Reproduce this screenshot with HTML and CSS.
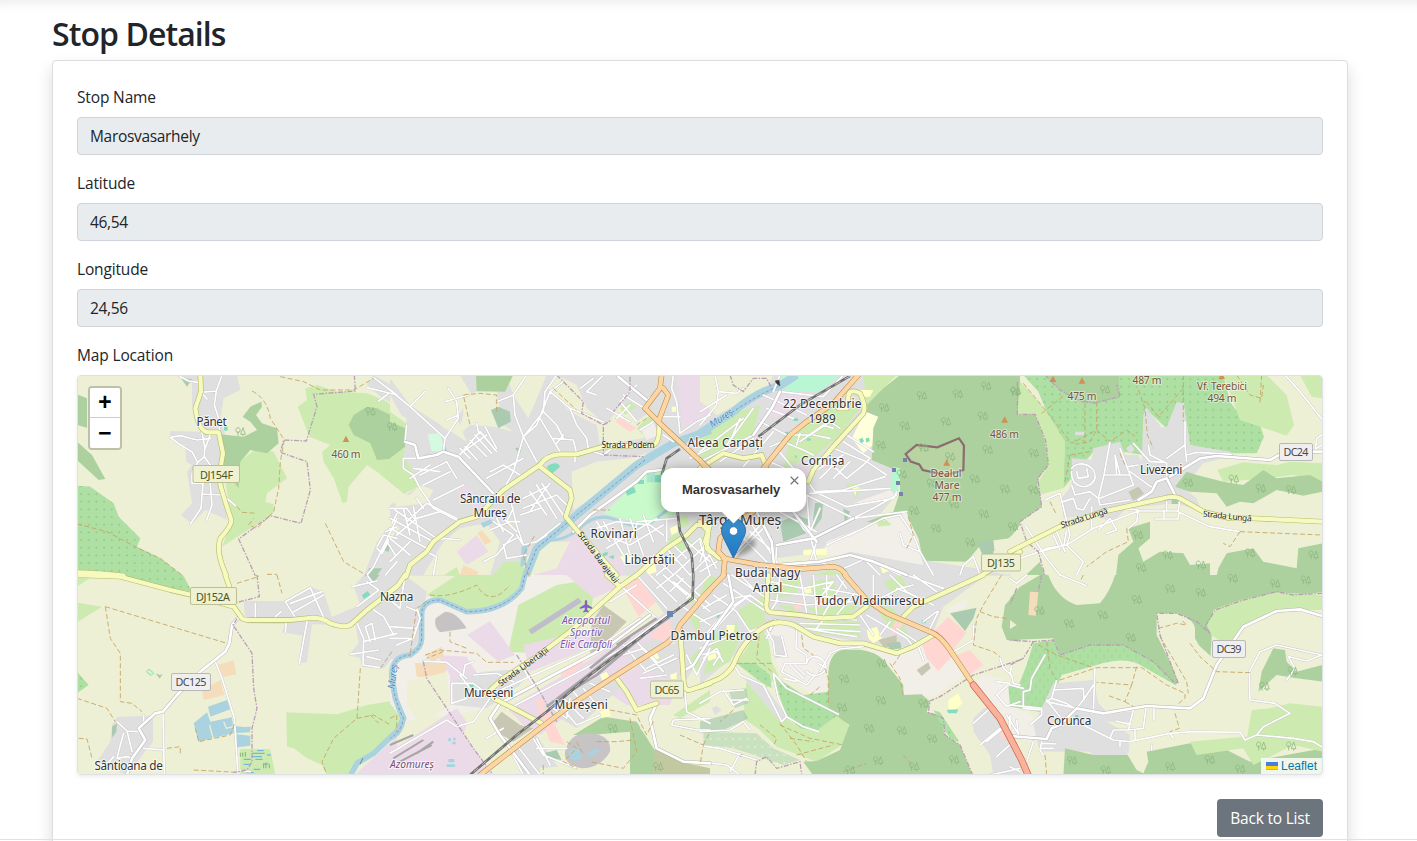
FILE: index.html
```html
<!DOCTYPE html>
<html lang="en">
<head>
<meta charset="utf-8">
<title>Stop Details</title>
<link rel="stylesheet" href="styles.css">
</head>
<body>
<main class="page">
  <h2 class="title">Stop Details</h2>
  <section class="card">
    <div class="field"><label class="label" for="n">Stop Name</label><input class="control" id="n" value="Marosvasarhely" readonly></div>
    <div class="field"><label class="label" for="la">Latitude</label><input class="control" id="la" value="46,54" readonly></div>
    <div class="field"><label class="label" for="lo">Longitude</label><input class="control" id="lo" value="24,56" readonly></div>
    <div class="label">Map Location</div>
    <div class="map">
<svg class="tiles" viewBox="78 376 1244 398" width="1244" height="398">
<defs>
  <pattern id="dots" width="23" height="23" patternUnits="userSpaceOnUse"><rect width="23" height="23" fill="#aedfa3"/><circle cx="12" cy="12" r="1.6" fill="#5f9d62"/></pattern>
  <pattern id="vine" width="24" height="36" patternUnits="userSpaceOnUse"><rect width="24" height="36" fill="#aedfa3"/><path d="M6 4v12M18 22v12" stroke="#83c07c" stroke-width="1"/></pattern>
  <pattern id="plus" width="22" height="24" patternUnits="userSpaceOnUse"><rect width="22" height="24" fill="#c9e1bf"/><circle cx="11" cy="12" r="2.5" fill="#eef6e8"/></pattern>
  <g id="tree"><path d="M-7 13V-2M8 14V8M-7 3c-8 0-9-15 0-15c9 0 8 15 0 15M8-12L1 8H15Z"/></g>
  <path id="peak" d="M0-10L10 9H-10Z"/>

  <g id="streets">
    <g class="ta">
      <path d="M310 5L335 18L362 22M372 52L390 72M372 52L418 48L435 0M418 48L412 90L425 130L428 172M375 172L383 215L382 245L362 262L345 230L310 210L280 187L310 182L360 195L400 190M400 178L385 220M362 262L345 295L345 325H378M382 245L400 270V330L405 390L388 437M378 325L372 400L340 447M375 357L438 360L475 392M870 38L960 60M890 8L960 60M905 78L935 55"/>
      <path d="M960 430L890 575L870 600M900 515L920 480L960 490M925 470L960 455M900 520L915 535L935 495M945 445L960 415M930 500L955 540M960 560L925 600"/>
    </g>
    <g class="tb">
      <path d="M413 255L435 310L472 430L482 585L520 590M258 412L262 600M200 520L262 525M120 440L150 468L185 470M150 468L165 530M140 475L130 510L120 550L150 545L165 550M110 545L80 580M535 135V85M595 125L612 110M625 80L700 38L740 128M625 80L655 128M640 85L735 50M650 110L740 60M628 140L625 172M690 140L667 265M870 20L905 45L840 95M825 35L900 18M870 0L885 20M890 105L920 125L950 180M840 145L860 190L858 270L910 278M820 238L905 225M860 200L960 175M865 155L880 200M885 145L895 195M865 155L885 145M870 245L910 255M200 450L200 420"/>
    </g>
    <g class="tc">
      <path d="M0 45L60 95L105 50M60 95L165 190L205 130L200 80L175 40M165 80L235 60M165 190L160 230L205 245L310 355M170 135L205 120M45 200L75 210L85 245L140 240L160 230M45 200L50 150M85 250L40 250L40 280L70 300L90 340L130 400L210 440M90 300L170 260L200 310M70 280L150 290M100 330L180 290M130 375L220 330M60 310L120 270M205 245L270 170L320 230M220 230L290 180M240 195L290 245M255 180L305 235M225 215L262 255M265 170L260 145M285 155L320 220M210 220L240 250M290 310L400 250M300 290L340 270L390 300M320 80L370 60L410 0M370 60L375 120L400 185L370 290L340 345M400 185L440 150L480 50L520 20M480 50L540 100L560 150L590 190L595 225M400 185L440 260M460 110L500 150L520 190M450 130L510 230M540 100L640 140M400 185L460 110L465 50L500 0M595 225L640 240L690 200M490 190L550 195L560 235M500 205L520 180M555 240V260M590 50L640 0M570 40L610 10M590 50L620 60M685 5L770 75L810 45M700 60L780 110M740 30L690 80L740 140M720 90L680 130M650 100L720 140M790 140L750 165M870 175L860 80L845 40L850 0M820 125L870 125M870 175L920 140L960 120M820 180L850 200M960 220L900 250"/>
      <path d="M0 430L130 500M0 460L110 520M15 405L140 490M40 400L60 480M70 395L90 500M50 440L110 385L200 430M20 480L80 430L150 410M0 400L50 400L80 440M80 370L100 400M0 560L60 500M0 490L60 540M130 500L160 490L210 495M110 530L140 545L130 600M360 370L380 450L400 510L380 480M370 400L350 440L390 440M420 410L460 350L480 325M400 400L500 360L540 400M400 370L470 335M390 420L450 400M440 330L500 430M420 350L470 420M455 325L520 420M340 470L320 430M310 440L370 480L320 540L280 560M340 430L380 470M300 465L360 440M380 490L340 510L350 550L410 540M440 500L470 480M400 510L440 500L510 445M550 470L600 420L740 320L770 290L815 285M620 440L660 500M640 440L700 540M690 430L720 540M720 430L760 540M740 440L860 430M620 460L680 440L780 450L820 480M600 460L720 510L820 450M650 520L800 430M760 420L790 500M740 450L720 500M830 430V500M770 560L850 510L890 550M790 540L850 600M830 520L900 600M880 490L960 560M800 600L930 490M850 600L960 500M900 600L960 540M930 500L960 600"/>
    </g>
    <g class="td">
      <path d="M0 75L30 100L45 0M0 155L80 160M80 100L90 130L70 190L20 210M50 95L85 110M60 190L0 190M100 258L170 262L230 310M185 325L250 325L290 355M185 325V385L230 370M210 300L240 340L300 350M250 300L320 295L370 320M220 300L225 270L250 260M200 455L250 440L300 370M200 455L170 435L0 535M300 430L330 385L380 360L660 210L780 120M300 430L330 480L420 600M350 405L690 225L830 120M320 350L650 200L750 130M290 490L340 460M400 280L430 330M500 380L560 450L630 420M490 400L530 430L540 370M520 370L580 430M550 350L600 410M580 340L620 390M600 325L660 350M360 525L400 600M440 490L480 570M380 510L450 600M440 520H530M430 490L460 540L560 580M700 40L800 130M740 0L830 100M780 0L860 80M700 240L760 220L800 260M700 210L770 290M740 200L820 290M770 280L850 240M730 260L810 220M760 295L860 250M750 310L830 300M800 385L780 430L800 520L880 560L960 565M885 350L890 410L960 445M960 430L850 435L845 450L920 465H960M740 30L660 80M960 0L890 70M850 20L960 110M840 50L880 10M870 90L960 150M890 190L960 200M890 240L920 300L960 220M885 285L910 270L960 190M820 0L890 60M860 0L960 90M800 40L850 0"/>
    </g>
    <g class="te">
      <path d="M45 0L55 50L110 55L130 40M0 110L80 60M55 50L50 90L0 150M240 50L370 65L430 0M240 0L220 50M240 50L215 100L160 180L0 260M200 100L280 130M180 140L260 180M220 170L130 275M190 60L320 120M160 100L80 210M120 130L90 200M0 230L130 130M60 260L160 190M210 215L270 190M250 200L310 225L340 240M280 180L330 180L390 140L420 160M300 200L370 150L400 160M300 175L290 210M340 180L390 190M210 260L300 300M230 220L280 280M325 320L345 350L430 345L555 305M345 350L440 395L580 370L590 350M340 290L430 240M375 250L440 310M400 220L500 260L560 300M430 200L510 250L490 270M440 180L520 230M360 310L420 250M400 310L450 260M440 310L490 270M320 360L460 430L620 410M330 355L570 340M460 430L380 470L340 490L230 510M460 430L520 400L590 360M230 510L225 600M320 360L330 480L350 560M280 411L310 460L350 500L330 560L290 590M170 411L210 480L225 600M240 411L350 470M360 400L330 470M130 411L250 590M190 440L110 530M130 490L200 560M150 470L220 530M100 550L190 460M0 440L60 440M0 490L50 580M30 470L0 560M0 590L50 560M230 570L360 560L450 540L520 560L620 600M360 560L420 585L500 550L600 600M450 480L550 430L600 420L640 480L660 530L610 510L600 475M380 510L500 455M660 530L700 600M780 600L790 570L820 545L840 600M540 600L500 560"/>
    </g>
    <g class="tf">
      <path d="M85 0L100 80L0 200M70 25L200 110M40 60L110 110M10 100L80 60M0 140L70 110L150 60M20 190L110 90L150 60L190 90M150 60L100 70M110 110L150 170L190 155M0 240L50 230L70 260M10 250L50 220L60 240L40 270M0 220L100 180M95 0L200 70M120 0L160 40L200 40M210 20L310 40L400 20M240 0L230 80L210 110M300 0L320 115M210 50L430 70M210 75L320 90L460 80M340 0L350 120M380 0V60M410 0L440 40M400 20L350 80M370 40L480 60L500 90M430 20L370 120M460 60L410 120M300 145L480 150M310 160L480 170M340 165L470 185M240 120L470 135M370 135L350 160M480 120L520 180M500 120L620 190L640 215M590 160L650 200M570 140L540 180M520 0V80L600 40L640 30M570 0L620 50L700 90M560 60L600 80M590 40L660 70M620 0L730 40M640 0L710 50M670 140L710 110L715 110L690 160M760 230L820 195V150M655 215L670 255M200 165L220 200L225 240L260 245L245 185M210 165L200 190M290 160L288 220L320 240L320 265M320 265C330 225 380 250 378 280C370 300 340 310 320 290M320 265H255L245 290L320 330L345 300M270 270L310 310M285 270L315 300M250 310L290 320M378 280L355 265M360 290L390 235L420 222L490 215M105 275L120 300L190 330L245 440L260 425L235 370L220 300M220 295L260 340L320 370L415 418M260 425L310 455L355 470M0 385L60 350L130 345M70 345L100 390L140 370M90 375H145M0 470L90 465L130 440L150 465M0 512L60 520L170 555M120 535L90 590M0 560L80 570L120 600M820 445L870 400M840 510L900 460M860 500L920 450M870 600L960 580M890 545L940 500M890 320L930 325L890 360L920 395L960 380M920 420L960 485L930 490M900 250L910 280L935 300L940 325L960 330"/>
    </g>
    <g class="tg">
      <path d="M825 0L870 50L935 132M935 180L920 190L915 232M920 220L935 210M300 200L282 300L265 370L270 390L360 375M300 300L320 300L315 240M315 240L330 300M282 300L360 300L330 220M360 300L370 330L270 370M370 205L420 260L465 262M415 210L420 240L470 265V310M525 140L525 210L470 250M525 210L530 260M530 240L560 232L665 238M355 275L385 270M360 290L430 340M185 280C200 255 260 265 255 310C240 350 180 340 185 290M200 290L205 310L235 305L230 280M185 330L195 360L240 350L265 370M190 370L200 400L220 405L240 370M105 375L150 355L180 480L170 510M160 380L190 370M245 395V460M330 400L385 405L380 440L355 460M30 550L90 530L170 510L250 460L385 408L500 408L600 455L688 470M435 432H505V400M462 405V432M45 450L110 550L150 600M90 530L110 520L170 510L220 560L200 600M130 480L150 525M140 470L165 530M170 465L160 520M265 465L300 430L320 465L290 475M470 405V380M510 370L505 408"/>
    </g>
    <g class="th">
      <path d="M0 10L20 25L50 0M150 0L230 32M105 240L65 310L60 345L40 350V400L90 405M0 330L40 340M0 390L95 400V420L60 450M5 270L0 300M125 370L110 380L200 400L220 375L250 330M140 315L125 370L170 385L200 405M130 345L220 340L222 375M255 280L250 410M150 425L110 375M200 440L310 495L360 500L480 475L550 470L690 472L705 495L740 480L850 490L910 500L935 515M370 405L355 465L400 460L408 400M432 400V435M318 438L360 448M300 490L310 465L355 465M375 465V495M330 500V515M480 475L490 490M425 510V525M740 480L760 455L840 415L795 385L720 375L718 290L750 230L800 210L935 240L890 258L835 245L855 280L830 315M95 500L90 525L100 540M95 505L140 507M95 520H130M70 500L50 560M0 575L30 590M0 420L0 480M20 435L25 480"/>
    </g>
  </g>

  <g id="avenues">
    <g class="tb"><path d="M487 125L465 150L457 205L445 230L370 290L300 360L258 410L235 415L185 460L205 495L165 550L150 600"/></g>
    <g class="tc"><path d="M45 200L75 210L85 250L140 240L160 230L205 245L310 355M550 470L600 420L740 320L770 290L815 285M685 5L770 75"/></g>
    <g class="tf"><path d="M85 0L100 80L20 190M210 165L225 135"/></g>
    <g class="tg"><path d="M385 375L425 350L440 320L470 310L495 360M480 305L570 250L620 243L780 255L810 238M910 230H937"/></g>
    <g class="th"><path d="M0 483L110 492M110 492L125 460L150 450L200 400L280 415L410 393L540 400L580 370L620 270L700 155L800 108L870 103L937 123"/></g>
    <g class="te"><path d="M170 411L215 500L225 600M280 411L350 500M230 510L340 490L380 470L460 430M240 50L215 100L160 180M230 570L360 560L450 540L520 560L620 600"/></g>
    <g class="td"><path d="M800 385L780 430L800 520L880 560L960 565M420 600L330 480L300 430L330 385L660 210L780 120M885 285L910 270L960 190"/></g>
  </g>

  <g id="yellow">
    <g class="ta"><path d="M370 0L372 50L355 100Q365 172 395 172H425L438 235L432 270L430 330L445 380L463 435Q465 450 430 490Q415 530 448 602M0 592L70 595L140 602"/></g>
    <g class="tb"><path d="M445 0L457 35L470 95L495 130Q500 135 520 135H640L710 128Q740 130 760 145Q800 160 820 150L870 105L960 35M0 0L130 5L280 45L345 60L470 95"/></g>
    <g class="tc"><path d="M48 605L60 570L110 530L130 500L210 440L260 425L300 385L340 345L450 270Q470 240 510 238H560L640 215L790 210Q808 205 808 150M450 275L540 345L545 370L527 425L560 465L680 600M735 605L830 520L890 480L920 450H960L945 500L960 530"/></g>
    <g class="td"><path d="M0 50L25 30L45 0M740 0L690 35L640 80L540 170L440 245L340 310L290 355M310 370L380 405L455 445M650 0L690 35M680 310L710 350L740 405L800 385M870 160L880 300Q880 350 900 345L960 325"/></g>
    <g class="te"><path d="M325 320L340 285L400 215L490 115Q500 95 480 55Q440 35 445 80L440 100L415 100M0 280L70 235L130 250L185 240L200 280M0 440L25 470L20 520L60 550M840 604L960 530"/></g>
    <g class="tf"><path d="M205 0L200 80Q195 110 215 112L300 120L370 130L460 125L500 95M0 335L60 310Q90 290 100 270Q120 220 150 190Q200 140 240 142Q280 145 290 155L340 185L420 205L490 205L590 235L640 215L700 180M610 125L640 95L850 0"/></g>
    <g class="tg"><path d="M0 530L60 500L150 455L280 410L460 370Q490 362 510 370L580 410L660 430H730L940 440"/></g>
  </g>
  <g id="orange">
    <g class="tc"><path d="M815 0L810 40L765 100L815 150L960 285M820 40L835 60L805 140"/></g>
    <g class="te"><path d="M0 255L110 411M190 280L270 180L320 140L400 85L475 0M200 270L160 411L110 440L60 490L55 530L75 550L70 602M70 550L180 570L300 582L400 575Q430 580 440 605"/></g>
    <g class="tf"><path d="M72 0L0 75M435 0L500 75L560 115L690 170Q720 180 750 225L822 332"/></g>
    <g class="td"><path d="M960 45L870 150Q860 180 830 205L680 300L550 385L450 460L270 600"/></g>
  </g>
  <g id="rail">
    <g class="tc"><path d="M815 300L830 250L870 222M862 405L870 470L905 540L910 602"/></g>
    <g class="td"><path d="M910 0L908 70L840 120L720 210L600 300L470 410L380 480L240 600"/></g>
    <g class="te"><path d="M450 3L300 90L175 185"/></g>
  </g>
</defs>

<rect x="78" y="376" width="1244" height="398" fill="#eef0d5"/>
<g class="ta">
  <polygon class="grass" points="662,95 690,75 685,40 720,30 780,50 870,55 920,75 960,100 960,340 900,290 870,270 815,335 810,380 797,385 770,310 740,260 735,230 760,210 697,185"/>
  <polygon class="grass" points="440,290 500,250 540,220 590,230 630,310 570,355 565,380 590,388 590,415 435,515 465,440"/>
  <polygon class="forest" points="0,58 30,70 30,158 0,150"/><polygon class="forest" points="0,200 45,240 85,312 65,315 0,255"/>
  <polygon fill="url(#dots)" points="0,332 40,335 110,385 125,425 190,490 180,515 250,550 315,600 0,600"/>
  <polygon class="town" points="345,0 480,0 490,45 440,70 430,130 445,180 440,330 450,435 385,405 345,447 312,420 345,385 330,290 345,270 327,260 325,210 300,205 278,185 280,168 370,170 345,90"/>
  <polygon class="forest" points="428,178 500,185 540,165 520,140 497,125 520,95 553,80 555,95 537,120 555,145 600,160 605,205 570,235 520,225 490,260 485,340 470,320 440,290"/>
  <polygon class="forest" points="815,150 830,120 870,95 900,100 960,130 960,250 900,255 880,205 830,180"/>
  <polygon class="town" points="290,0 360,0 355,25"/><polygon class="park" points="312,10 345,12 330,35"/>
  <polygon class="town" points="870,30 890,0 960,40 960,95 910,65"/><polygon class="town" points="900,500 960,430 960,602 860,602"/>
  <rect fill="#82dcbe" x="441" y="154" width="11" height="13"/><polygon class="park" points="920,505 940,510 935,530 918,525"/><polygon class="park" points="875,580 915,580 900,602 875,602"/>
</g>
<g class="tb">
  <polygon fill="url(#dots)" points="130,0 318,0 345,50 280,38"/><polygon fill="url(#dots)" points="0,290 35,330 0,355"/>
  <polygon class="grass" points="0,83 75,95 0,142"/><polygon class="grass" points="0,0 45,5 0,35"/>
  <polygon class="town" points="500,78 625,78 700,35 740,50 765,125 850,90 830,35 860,0 960,0 960,235 920,280 855,275 850,250 815,240 845,205 835,150 790,150 705,148 690,262 665,265 675,182 615,172 625,148 505,145"/>
  <polygon class="town" points="120,425 228,422 228,500 150,600 60,560 100,500 105,450"/>
  <polygon class="park" points="105,455 120,445 118,470 105,488"/>
  <polygon class="tan" points="422,270 470,256 478,298 438,306"/><polygon class="tan" points="375,345 430,315 442,360 380,375"/>
  <polygon class="water" points="393,395 450,375 460,403 400,425"/><polygon class="water" points="350,445 390,412 400,440 465,427 468,452 500,456 522,455 518,472 470,475 405,490 365,500"/><polygon class="water" points="480,478 520,482 520,512 480,517"/>
  <path d="M398 450L408 490M440 440L448 460L468 455" fill="none" stroke="#eef0d5" stroke-width="1.2"/>
  <polygon class="grass" points="628,412 780,418 870,390 960,375 960,470 870,545 820,602 750,602 735,570 690,550 650,520 630,515"/><polygon class="grass" points="490,522 580,522 595,600 490,600"/>
  <path d="M525 535h38M525 545h30M500 553h22M535 553h22M540 527h20M560 567h15M500 568h20M530 583h20M510 593h20M570 540h12" stroke="#5eaee8"/><path d="M490 545v-12M497 545v-12M505 545v-14M560 580v-15M567 580v-17M577 580v-12" stroke="#7eb46c"/>
  <polygon fill="#c8f8d0" stroke="#94dfa5" points="208,290 216,282 230,294 222,302"/><path class="park" d="M236 295L248 300L257 297L248 311Z"/>
  <polygon class="park" points="870,0 908,0 885,28"/><polygon fill="#82dcbe" points="855,60 872,48 880,60 860,72"/>
  <polygon class="ind" points="830,602 960,485 960,602"/>
</g>
<g class="tc">
  <polygon class="town" points="0,10 60,90 230,200 150,0 960,0 960,602 0,602 0,390 90,330 40,240 50,130 0,100"/>
  <polygon class="farm" points="10,0 210,0 245,60 200,130 170,165 75,85"/><polygon class="farm" points="0,60 45,140 0,120"/>
  <polygon class="farm" points="220,60 260,50 320,50 340,150 370,170 310,155 240,150 200,185 220,120"/><polygon class="farm" points="350,0 470,0 415,130 370,60"/>
  <polygon class="farm" points="500,0 560,30 590,100 650,150 690,90 740,140 780,110 760,190 630,210 620,150 540,110 475,40"/>
  <polygon class="farm" points="545,290 620,260 720,250 770,235 730,290 550,405"/>
  <polygon class="farm" points="0,355 60,360 90,330 130,345 110,385 20,395"/>
  <polygon class="farm" points="210,460 290,445 330,500 300,600 100,600 160,500"/>
  <polygon class="farm" points="0,430 30,460 0,490"/>
  <polygon class="grass" points="0,110 48,145 50,200 40,240 92,330 42,357 0,320"/><polygon class="forest" points="0,140 45,160 45,215 0,250"/>
  <polygon class="forest" points="258,0 370,0 345,50 260,48"/><polygon class="park" points="303,105 325,95 360,110 362,140 325,160"/><polygon class="park" points="375,220 395,215 390,238"/>
  <polygon fill="#d4fbe0" points="113,178 150,175 165,230 125,228"/><polygon class="water" points="160,195 172,230 158,225"/>
  <polygon class="ind" points="200,345 225,330 290,390 260,400 210,370"/><polygon class="ind" points="200,530 260,480 295,530 230,570"/><polygon class="ind" points="860,0 960,0 960,120 880,170"/>
  <polygon class="ind" points="470,530 570,475 650,540 710,540 700,600 440,600"/><polygon class="farm" points="400,560 450,500 540,500 500,580 430,600 410,600"/>
  <polygon class="tan" points="262,475 275,465 305,500 285,510"/><polygon class="tan" points="220,570 265,590 260,602 210,600"/><polygon class="tan" points="345,440 360,433 370,450 355,460"/>
  <polygon class="grass" points="200,575 160,602 210,602"/><polygon class="grass" points="305,602 345,560 400,560 405,602"/>
  <polygon fill="#c8facc" points="640,415 690,370 765,300 830,275 865,411 780,450 730,440"/><polygon class="grass" points="690,100 720,80 740,95 705,120"/><polygon class="grass" points="740,160 780,120 790,140 760,180"/><polygon fill="#82dcbe" points="705,345 732,335 738,352 712,362"/><path fill="#82dcbe" d="M742 315h20v12h-20zM795 300h18v22h-18zM638 535l15-5v10l-14 5zM655 545l18-4-3 12z"/><path fill="#a9e9ce" d="M770 292h25v30h-25z"/>
  <path fill="#82dcbe" d="M470 275Q500 255 510 275L485 297Z"/><path class="water" d="M272 445l30-12 8 10-30 15zM395 515l18-5-5 60-17 5z"/>
  <path class="lemon" d="M845 95h15v15h-15zM840 460l20-10 5 20-20 10zM690 545l30-15 15 25-30 15zM765 580l30-12 5 22-25 10z"/>
  <polygon class="retail" points="675,140 690,130 740,160 720,170"/><polygon fill="#f2efe9" points="750,160 790,140 805,180 770,195"/>
  <path class="grass" d="M830 490l50-20 30 40-40 20zM860 430l30-10 10 30-30 10z"/>
</g>
<g class="td">
  <polygon fill="#f2efe9" points="70,100 110,60 200,50 400,0 600,0 480,200 380,270 300,400 40,440 0,390 0,250 70,240"/>
  <polygon class="town" points="0,0 45,0 110,50 90,190 60,240 0,255"/>
  <polygon class="grass" points="110,60 200,0 400,0 380,60 290,105 230,110 150,75"/><polygon class="grass" points="0,385 35,430 30,480 0,490"/>
  <polygon class="grass" points="355,230 385,90 500,30 560,20 610,60 600,140 440,235"/>
  <polygon fill="#bfbdcc" points="415,165 565,68 575,82 425,178"/>
  <polygon class="ind" points="232,180 300,138 375,240 325,260"/><polygon class="ind" points="530,0 640,0 690,35 610,70"/>
  <polygon class="ind" points="0,530 200,400 350,602 0,602"/><polygon class="ind" points="140,240 230,245 270,310 180,380 180,300"/>
  <polygon class="town" points="190,315 280,290 420,280 390,330 290,400 190,390"/>
  <polygon class="ind" points="350,400 640,230 830,110 870,160 700,300 450,480 400,450"/>
  <polygon class="ind" points="400,210 420,290 570,230 620,180 530,180"/><polygon class="ind" points="650,350 710,390 840,390 880,280 830,215 700,300"/>
  <polygon class="tan" points="75,265 170,262 165,310 80,305"/><polygon class="tan" points="105,240 155,215 160,245 125,258"/>
  <polygon class="farm" points="50,320 170,290 180,390 90,450 50,390"/><polygon class="farm" points="240,420 300,410 340,500 400,602 310,602 220,480"/>
  <path fill="#c5c3c3" d="M137 130L165 110Q200 110 230 160L150 172Q130 155 137 130Z"/>
  <polygon fill="#c7c7b4" points="310,440 335,410 390,450 430,460 370,500 320,470"/><polygon fill="#c7c7b4" points="605,140 640,90 710,140 600,250"/>
  <polygon class="retail" points="510,300 570,248 580,265 530,310"/><polygon class="retail" points="700,40 740,0 805,75 745,125"/><polygon class="retail" points="780,180 850,125 850,170 800,220"/><polygon class="retail" points="435,375 455,370 525,510 480,500"/>
  <polygon class="town" points="455,395 660,290 700,330 560,460"/><polygon class="town" points="700,240 790,190 860,210 870,320 820,310"/><polygon class="town" points="360,530 440,480 520,600 400,600"/>
  <polygon class="town" points="740,0 960,0 960,200 880,330 840,140"/>
  <polygon class="forest" points="550,480 640,425 740,440 790,520 860,600 720,600 720,470 600,480"/><polygon class="farm" points="450,580 560,570 660,540 650,490 720,480 710,602 450,602"/>
  <path fill="#c6c4c4" d="M525 530Q540 470 600 475Q665 480 660 530Q630 580 575 580Q520 570 525 530Z"/><path class="water" d="M535 530l25-15 20 30-20 12-22-5zM590 535l30-15 10 8-30 18z"/>
  <polygon class="farm" points="750,460 890,350 960,340 960,602 830,530 800,520"/><path class="grass" d="M850 420L960 345V380L870 430Z"/><polygon fill="#c2c9a0" points="795,515 870,560 960,580 960,602 790,602"/>
  <polygon class="park" points="460,535 500,525 515,555 480,550"/><rect fill="#82dcbe" x="234" y="327" width="16" height="13"/><path fill="#a5d4df" d="M175 490h8v9h-8zM187 500h10v8h-10zM190 488h7v8h-7zM175 552h18v10h-18zM170 568h25v8h-25z"/>
  <path class="lemon" d="M630 410l25-8 8 20-28 8zM840 300l20-8v20h-18zM780 240l20-8 8 18-20 8zM630 300l20-10 8 18-22 8z"/><path class="grass" d="M900 130l30-20 25 30-30 40zM900 250l30-30 20 20-30 50zM890 70l20-20 10 20-20 20z"/>
</g>
<g class="te">
  <polygon class="town" points="0,0 240,0 520,0 600,200 590,360 520,440 700,560 960,600 960,602 0,602"/>
  <polygon class="farm" points="0,0 220,0 200,40 50,120 0,80"/><polygon class="ind" points="0,80 30,100 20,130 0,140"/><polygon fill="#b8f6d4" points="240,0 420,0 360,50 260,50"/>
  <polygon class="ind" points="220,60 320,60 310,110 210,130"/><polygon class="grass" points="0,160 80,120 180,90 160,180 80,215 0,260"/><polygon class="grass" points="270,180 400,90 480,100 420,180 350,240 250,280"/>
  <polygon class="grass" points="490,0 590,0 500,90"/><polygon fill="#ffffdc" points="495,110 535,125 520,160 525,205 490,235 455,190"/>
  <polygon class="forest" points="500,90 550,40 600,0 960,0 960,450 930,490 850,500 800,560 670,557 655,490 615,410 550,448 500,440 580,410 600,350 600,290 515,255 520,160 535,125 500,110"/>
  <polygon class="grass" points="960,35 947,90 960,130"/>
  <polygon fill="#dbe0b0" opacity=".25" points="615,235 650,210 720,220 780,190 792,285 750,310 680,285"/>
  <polygon fill="#b5f8cf" points="580,275 600,280 595,350 570,345"/>
  <path fill="#f2efe9" d="M360 560L380 500L480 460L620 410L660 530L670 570L450 530ZM460 385L570 345L590 365L530 385Z"/>
  <path class="park" d="M240 440L290 420L330 435V470L250 500ZM345 385L370 378L365 430L335 470ZM430 400L450 410L435 450ZM830 500L880 495L885 540L850 545Z"/>
  <path class="farm" d="M230 550L300 540L420 540L360 565L230 575Z"/><path class="lemon" d="M310 525l70-5v20h-70zM540 575l20-8 8 20-20 8zM480 45h40l-10 20h-25zM450 330l30-4-10 40z"/>
  <path class="grass" d="M440 325h45v10h-45zM470 340l10 5-15 32zM530 440l30-5 15 15-40 5z"/><polygon class="farm" points="880,530 960,460 960,602 870,590"/>
  <path fill="#82dcbe" d="M477 193l10-5 5 10-8 8zM497 190l10-2 2 10-10 5zM280 130h14v8h-14zM284 240l8 3-4 8zM320 190h12v7h-12zM255 170h10v8h-10z"/><path class="ind" d="M290 275l30-5 10 30-15 20z"/>
  <path class="grass" d="M340 600l50-15 60 17zM0 290l30-15 10 20zM0 480l15 10-5 40-10 5z"/>
</g>
<g class="tf">
  <polygon class="town" points="0,0 700,0 860,0 730,95 700,170 640,220 480,200 300,170 240,150 150,200 0,330"/>
  <path class="grass" d="M110 110L190 60L195 140L150 170ZM40 180L110 140L120 190L90 260L10 300ZM215 20L300 10L290 60L220 70ZM320 100L480 90L450 120L360 120ZM300 140L480 140V190L350 175ZM330 20L400 10L410 60L340 70ZM230 90L300 95L280 115ZM520 90L580 100L640 200L570 160ZM20 0L60 10L40 40L0 60ZM550 20L600 0L620 30L580 60Z"/>
  <polygon class="grass" points="110,265 180,160 205,190 215,260 235,300 200,340"/><polygon fill="#f2efe9" points="230,140 300,170 480,205 590,235 690,180 760,230 810,290 700,365 610,360 610,330 550,250 480,215 400,230 375,290 385,350 340,360 240,290 200,180"/>
  <polygon fill="url(#dots)" points="110,265 165,265 210,300 215,340 190,325"/><polygon class="grass" points="140,310 190,360 260,430 300,460 400,430 415,415 448,455 440,500 350,560 230,515 180,465 130,430"/>
  <polygon fill="url(#dots)" points="218,300 310,360 385,350 415,420 385,440 350,468 300,460 260,425"/>
  <polygon class="town" points="120,295 190,325 260,425 240,440 160,345"/><polygon class="town" points="215,180 245,185 265,245 225,250"/>
  <polygon fill="url(#plus)" points="10,470 170,475 220,520 300,555 250,570 100,520 10,510"/><polygon class="park" opacity=".7" points="0,440 130,405 145,430 60,470 0,475"/><polygon class="park" opacity=".6" points="85,345 140,340 145,385 105,400"/><polygon class="town" points="35,400 50,393 65,405 45,420"/>
  <path class="forest" d="M385 290Q390 230 430 224H480Q530 230 550 255L610 330V360L665 358L690 380L680 412L720 420L735 480L780 510L818 602H340L310 560L350 558L420 525L448 450L385 405Z"/>
  <polygon fill="url(#dots)" points="700,405 720,412 778,500 750,490 730,460"/>
  <polygon class="retail" points="665,205 745,125 800,175 765,215 755,245 715,288 680,250"/><polygon class="retail" points="770,240 810,225 850,270 810,300"/><polygon class="retail" points="275,80 305,75 305,100 285,105"/><polygon class="retail" points="585,140 608,145 595,180 570,175"/>
  <polygon fill="#c7c7b4" points="535,195 590,180 590,220 550,215"/><polygon fill="#c7c7b4" points="650,285 685,262 692,280 665,303"/><path class="park" d="M560 205L600 200L605 220L570 225ZM750 115L830 98L820 130L795 168Z"/>
  <path class="lemon" d="M500 165l30-10 15 35-25 15-15-15zM745 375l30-20 12 30-20 20-22-5zM80 150l25 0-5 30-20 10zM310 38l22-5 3 20-20 3zM20 230l25-5 5 25-25 8z"/><path fill="#82dcbe" d="M665 135h12v10h-12zM740 405l35-2-5 12h-25zM50 120h12v10h-12z"/>
  <polygon class="town" points="800,0 850,0 700,110 690,90"/><polygon fill="#f2efe9" points="735,105 800,70 800,95 750,115"/>
  <polygon class="forest" points="960,40 915,90 905,155 920,195 960,200"/>
  <polygon class="town" points="820,430 850,400 880,395 960,545 960,602 880,602 870,540 820,470"/><polygon fill="#f2efe9" points="850,300 900,310 960,370 960,480 820,330"/><polygon class="retail" points="900,475 915,468 920,490 905,495"/><polygon fill="url(#vine)" points="925,335 960,325 960,400 930,390"/>
</g>
<g class="tg">
  <polygon class="forest" points="0,0 30,0 30,110 80,120 110,200 115,270 85,310 95,395 30,440 0,470"/><polygon class="grass" points="30,20 60,50 110,110 165,200 160,340 95,358 80,330 115,270 105,200 75,118 22,120"/>
  <polygon fill="url(#dots)" points="40,0 640,0 660,80 700,135 750,150 762,185 740,235 640,235 540,210 520,80 470,160 405,100 400,240 340,230 250,230 160,340 165,200 110,110 85,50"/>
  <polygon class="forest" points="110,0 325,0 330,65 250,85 205,75 150,45"/>
  <polygon class="grass" points="640,0 770,0 830,60 852,150 830,182 750,155 690,135"/><polygon class="grass" points="870,0 937,0 937,70 905,65"/>
  <polygon class="town" points="185,250 245,255 250,220 330,200 345,240 385,240 395,260 400,120 410,98 455,158 470,155 500,82 520,85 540,210 660,230 670,243 580,265 520,340 560,370 575,410 500,385 350,400 310,440 240,420 160,430 155,370 185,330"/>
  <path class="town" d="M195 170h28v11h-28zM348 220l15-12 12 16-15 12z"/><polygon fill="#c7c7b4" points="355,350 385,335 402,355 370,378"/><path class="park" d="M485 375h20v12h-20z"/>
  <polygon class="grass" points="622,285 700,262 800,270 840,260 937,265 937,320 850,300 770,310 640,320"/>
  <polygon class="forest" points="495,335 530,290 560,300 640,320 700,330 760,285 800,310 900,300 937,320 937,350 880,362 800,345 730,385 690,380 650,395 620,355 540,350"/>
  <polygon class="forest" points="355,460 420,440 420,490 385,520 400,560 450,530 520,535 540,570 600,565 600,602 318,602 325,540 370,500"/><polygon class="forest" points="625,580 650,535 730,520 760,560 860,580 865,520 937,505 937,602 620,602"/><polygon class="forest" points="45,602 90,560 105,602"/>
</g>
<g class="th">
  <path class="forest" d="M50 10L90 0H937V52L700 75L610 105L600 270L555 190L500 120L440 115L445 180L505 320L495 330L430 260L340 210L150 240L130 190L0 195V50L35 30Z"/>
  <path class="farm" d="M115 0Q140 70 200 90L270 85Q300 50 315 0Z"/><polygon class="farm" points="0,0 90,0 30,35 0,70"/><polygon class="tan" points="60,50 85,52 78,122 55,120"/>
  <polygon class="farm" points="0,135 20,150 0,162"/><path class="farm" d="M440 115L500 115Q550 130 555 160V200L620 260L590 350L500 390L520 340L440 180Z"/>
  <polygon class="grass" points="590,150 620,100 700,72 800,52 937,60 937,105 800,105 700,150 660,220 605,180"/>
  <path fill="url(#vine)" d="M70 205L130 195L150 240L240 208L340 210L430 260L500 332L400 275Q350 240 260 270L155 300L110 415L0 395L50 270Z"/>
  <polygon fill="#f2efe9" points="0,400 60,415 100,480 60,500 0,480"/>
  <polygon class="town" points="90,410 130,325 250,315 265,385 290,410 370,410 365,440 290,440 360,480 355,550 250,550 240,530 90,530 70,450"/>
  <polygon class="forest" points="165,520 250,540 360,540 400,595 410,530 540,505 640,520 720,560 937,520 937,602 160,602"/><polygon class="grass" points="540,500 700,485 937,490 937,530 850,510 730,570 700,520 560,540"/>
  <polygon class="grass" points="725,405 780,400 840,385 937,395 937,510 710,495"/><path class="forest" d="M790 220L825 225L830 260L860 290L937 270V320L860 310L800 300L745 350L755 290Z"/>
  <polygon class="farm" points="350,535 410,530 415,560 400,595 380,585"/><path fill="#82dcbe" d="M195 420h10v8h-10z"/>
</g>

<g class="river">
  <g class="tc"><path d="M962 165L850 205L740 270L560 420L440 520L408 602"/><path class="thin" d="M470 495Q520 500 570 460Q620 405 690 440Q760 470 800 430L850 390"/></g>
  <g class="td"><path class="mid" d="M405 0L395 40Q340 110 230 110L150 75Q95 75 95 120V190Q95 220 60 240Q5 245 5 300Q10 370 40 430Q35 470 0 490"/></g>
  <g class="tb"><path class="mid" d="M945 300L955 370L980 430L960 468L890 535L840 565L820 602"/></g>
  <g class="te"><path d="M0 175L100 110Q170 50 240 32L290 0"/></g>
</g>
<g class="riverline">
  <g class="tc"><path d="M765 255L560 420L440 520L408 602"/></g><g class="td"><path d="M405 0L395 40Q340 110 230 110L150 75Q95 75 95 120V190Q95 220 60 240Q5 245 5 300Q10 370 40 430Q35 470 0 490"/></g><g class="te"><path d="M70 130Q170 60 240 32"/></g>
</g>

<use href="#streets" class="st-case"/><use href="#streets" class="st-fill"/>
<use href="#avenues" class="av-case"/><use href="#avenues" class="av-fill"/>

<g class="track">
  <g class="ta"><path d="M525 48Q570 70 580 130L622 195L610 260L605 340L590 410L540 460L515 450L530 430M610 5L680 20L730 45L830 45L890 10M480 395L495 412L540 415M0 447L90 470L180 518L250 550L315 600M745 445L800 560L870 602M570 598h30"/></g>
  <g class="tb"><path d="M85 95L450 205M85 95L100 190L130 235V380L165 385L195 410M0 370L90 400L115 440M5 490L30 492L45 550M355 460L365 500L460 480L475 440M350 585L480 592M480 25L545 5L540 0M600 0L615 55M850 280L840 430L770 490L735 560L750 600M840 430L890 420L940 450M880 420L905 445M945 230L910 280M270 520L310 515V535"/></g>
  <g class="tc"><path d="M320 110V60L270 55L220 60L240 150M490 40L560 105M770 130L740 150M415 600L400 540L435 480M610 405h50"/></g>
  <g class="td"><path d="M120 60Q180 70 260 30Q300 100 360 30M110 80L80 100L60 240M105 240L150 225L260 235L290 262H370M180 170V200L230 220M160 230L110 250M0 430L20 420V470M660 405L740 420L770 480L790 440M720 430L740 530L700 580L600 560M530 500L560 520L520 560L560 580M560 500L580 540M620 500H680L730 495M870 480L940 510L930 570M940 510L960 470M460 570V600"/></g>
  <g class="te"><path d="M625 425L640 480L620 520"/></g>
  <g class="tf"><path d="M305 180L310 220L340 240M375 280L385 310V390M330 360L360 335M110 265H215M180 160L170 250L215 290M240 445L290 510L320 560M240 450L330 490L430 510M270 490L340 500M290 540L400 510M180 450L230 490L220 515M100 405L60 440M600 240L580 270M905 0L850 90L830 130L820 210L880 230L900 245M840 110L880 125L920 130M570 265L600 310L610 360M610 540L640 575M430 590L500 565"/></g>
  <g class="tg"><path d="M40 25L110 110L185 205L260 165L300 200L350 165L375 185M95 115L170 55L225 85V205M260 80V165L240 200L195 208M385 45L405 100L412 180L430 220M520 40L445 125L405 75M520 0V140M755 0L750 85M680 0L720 60L755 70L760 30M120 380L140 420M180 240L165 320M240 230L180 240M350 460L355 500L290 530L230 575M690 470L935 480M690 470L660 515L640 505M330 235L345 270"/></g>
  <g class="th"><path d="M445 160L500 145L530 150L515 135M450 185L530 320L535 355M150 315L260 278H395L470 330L525 355V370L500 390M380 275L365 330L260 322M365 330L345 380L290 360M345 380L370 395M540 205L570 245L620 290L720 293M495 415L508 460L480 470M85 210L140 240L250 278M110 200L120 280L140 315M105 540L110 600M220 0L210 20"/></g>
</g>
<g class="border">
  <g class="ta"><path d="M832 0L835 48L710 58L720 95L688 198L620 195L610 232L690 260L700 345L672 445L580 422L485 492L535 602"/></g>
  <g class="tb"><path d="M540 0L547 65L470 85L490 115L468 150L525 235L530 340L540 400L525 460V560L510 585L470 592"/></g>
  <g class="tc"><path d="M500 0L580 80L575 115L640 150V240L760 245M640 150L665 135M720 5V50L670 110"/></g>
  <g class="te"><path d="M90 0L100 30L130 50L160 10L200 10L215 40"/></g><g class="td"><path d="M100 260L110 310L250 520L310 600M380 240L450 350L500 440"/></g>
  <g class="tf"><path d="M960 255L820 300L720 365L690 378L685 412L730 430L735 480L780 510L818 600M165 600L170 560L200 545L230 580L300 560L305 600"/></g>
  <g class="tg"><path d="M22 20V118L75 118L108 200L115 270L83 310L95 395L30 440L50 500L85 530L105 602M105 0L150 45L205 75L250 85L330 65L320 30"/></g>
  <g class="th"><path d="M95 0L85 50M937 55L850 60L800 50L700 75L615 105L585 155L600 175L560 140L500 115L440 115L450 180L480 260L505 325L490 320L430 260L340 210L240 210L150 240L130 195L70 200L0 195M70 200L40 250L0 270M20 40L0 90"/></g>
</g>
<g class="quarry te"><polygon points="617,237 650,210 712,217 777,190 792,212 790,285 740,300 668,285 658,268 632,260"/></g>

<g class="tree">
  <g class="ta"><use href="#tree" x="490" y="170"/><use href="#tree" x="880" y="110"/><use href="#tree" x="945" y="155"/></g>
  <g class="te"><use href="#tree" x="665" y="62"/><use href="#tree" x="773" y="57"/><use href="#tree" x="858" y="33"/><use href="#tree" x="945" y="50"/><use href="#tree" x="552" y="98"/><use href="#tree" x="737" y="140"/><use href="#tree" x="848" y="123"/><use href="#tree" x="614" y="153"/><use href="#tree" x="670" y="218"/><use href="#tree" x="542" y="210"/><use href="#tree" x="863" y="224"/><use href="#tree" x="750" y="245"/><use href="#tree" x="605" y="298"/><use href="#tree" x="695" y="325"/><use href="#tree" x="824" y="312"/><use href="#tree" x="914" y="342"/><use href="#tree" x="642" y="407"/><use href="#tree" x="762" y="388"/><use href="#tree" x="851" y="417"/><use href="#tree" x="708" y="460"/><use href="#tree" x="810" y="502"/><use href="#tree" x="938" y="455"/></g>
  <g class="tf"><use href="#tree" x="432" y="312"/><use href="#tree" x="545" y="265"/><use href="#tree" x="426" y="398"/><use href="#tree" x="542" y="376"/><use href="#tree" x="670" y="386"/><use href="#tree" x="507" y="460"/><use href="#tree" x="605" y="467"/><use href="#tree" x="696" y="491"/><use href="#tree" x="534" y="557"/><use href="#tree" x="642" y="575"/><use href="#tree" x="762" y="554"/><use href="#tree" x="450" y="585"/></g>
  <g class="tg"><use href="#tree" x="17" y="48"/><use href="#tree" x="285" y="44"/><use href="#tree" x="71" y="234"/><use href="#tree" x="70" y="345"/><use href="#tree" x="534" y="323"/><use href="#tree" x="671" y="312"/><use href="#tree" x="752" y="340"/><use href="#tree" x="843" y="344"/><use href="#tree" x="384" y="480"/><use href="#tree" x="393" y="578"/><use href="#tree" x="473" y="540"/><use href="#tree" x="572" y="570"/><use href="#tree" x="720" y="534"/><use href="#tree" x="910" y="540"/></g>
  <g class="th"><use href="#tree" x="668" y="10"/><use href="#tree" x="887" y="15"/><use href="#tree" x="795" y="26"/><use href="#tree" x="480" y="41"/><use href="#tree" x="572" y="53"/><use href="#tree" x="380" y="74"/><use href="#tree" x="88" y="107"/><use href="#tree" x="278" y="120"/><use href="#tree" x="177" y="146"/><use href="#tree" x="362" y="188"/><use href="#tree" x="848" y="288"/><use href="#tree" x="763" y="334"/><use href="#tree" x="186" y="556"/><use href="#tree" x="287" y="585"/><use href="#tree" x="480" y="575"/><use href="#tree" x="599" y="554"/><use href="#tree" x="690" y="582"/><use href="#tree" x="753" y="513"/><use href="#tree" x="843" y="513"/></g>
  <g class="td"><use href="#tree" x="668" y="460"/><use href="#tree" x="804" y="575"/></g>
</g>
<g class="td" stroke="#a7a5a5" stroke-width="2" fill="none"><path class="yard" d="M470 395L640 265L840 125M490 380L620 300M600 280L720 185M620 300L780 165M680 210L800 130"/><path d="M10 550L100 495M30 560L125 510M80 535L130 500M0 510L70 480"/></g>
<use href="#yellow" class="ye-case"/><use href="#yellow" class="ye-fill"/>
<use href="#orange" class="or-case"/><use href="#orange" class="or-fill"/>
<g class="tf"><path class="red-case" d="M820 330L900 430L965 555L985 602"/><path class="red" d="M820 330L900 430L965 555L985 602"/></g>
<use href="#rail" class="ra-case"/><use href="#rail" class="ra-fill"/>
<g fill="#7981b0"><path d="M903 458h4v4h-4zM892 468h4v4h-4zM896 481h4v4h-4zM899 492h4v4h-4z"/><path fill="#6c85b3" d="M667 611h6v6h-6z"/></g>
<g fill="#d08f55"><g class="ta"><use href="#peak" x="807" y="192"/></g><g class="te"><use href="#peak" x="914" y="134"/><use href="#peak" x="740" y="263"/></g><g class="tg"><use href="#peak" x="129" y="12"/><use href="#peak" x="216" y="17"/><use href="#peak" x="635" y="3"/></g></g>
<path fill="#8461c4" d="M586 600q1.200 0 1.200 2v2.500l5 3v1.600l-5-1.600v2.600l1.600 1.300v1l-2.800-.7-2.800.7v-1l1.600-1.300v-2.600l-5 1.600v-1.600l5-3V602q0-2 1.200-2"/>

<g class="shield">
  <rect x="193" y="465.500" width="46.500" height="17" rx="1.500"/><rect x="190.500" y="587.500" width="46" height="17" rx="1.500"/><rect x="981.500" y="554" width="39" height="17" rx="1.500"/><rect x="650.500" y="681" width="33" height="17" rx="1.500"/>
  <g class="plain"><rect x="171.500" y="673.500" width="39" height="17" rx="1.500"/><rect x="1279.500" y="443.500" width="33" height="17" rx="1.500"/><rect x="1212.500" y="640.500" width="33" height="17" rx="1.500"/></g>
  <text x="216.500" y="478.500" textLength="33">DJ154F</text><text x="213" y="600.500" textLength="34">DJ152A</text><text x="1001" y="567" textLength="28">DJ135</text><text x="667" y="693.500" textLength="25">DC65</text>
  <g class="plaintext"><text x="191" y="686" textLength="31">DC125</text><text x="1296" y="456" textLength="25">DC24</text><text x="1229" y="653" textLength="25">DC39</text></g>
</g>
<g class="place">
  <text x="211.500" y="426" textLength="30">Pănet</text><text x="490" y="503" textLength="60">Sâncraiu de</text><text x="490" y="517" textLength="33">Mureș</text><text x="613.500" y="538" textLength="46">Rovinari</text><text x="649.500" y="564" textLength="50">Libertății</text><text x="396.500" y="601" textLength="33">Nazna</text><text x="128.500" y="770" textLength="68">Sântioana de</text><text x="488.500" y="697" textLength="49">Mureșeni</text><text x="581" y="709" textLength="53">Mureșeni</text><text x="714" y="640" textLength="87">Dâmbul Pietros</text><text x="725" y="446.500" textLength="75">Aleea Carpați</text><text x="822" y="408" textLength="78">22 Decembrie</text><text x="822" y="423" textLength="27">1989</text><text x="822.500" y="465" textLength="43">Cornișa</text><text x="767.500" y="577" textLength="65">Budai Nagy</text><text x="767.500" y="592" textLength="29">Antal</text><text x="870" y="604.500" textLength="109">Tudor Vladimirescu</text><text x="1161" y="473.500" textLength="42">Livezeni</text><text x="1069" y="725" textLength="44">Corunca</text>
  <text class="city" x="740" y="525" textLength="82">Târgu Mureș</text>
</g>
<g class="peaktext"><text x="346" y="457.500" textLength="29">460 m</text><text x="1004.500" y="438" textLength="29">486 m</text><text x="1082" y="400" textLength="29">475 m</text><text x="1147" y="383.500" textLength="29">487 m</text><text x="1222" y="390" textLength="50">Vf. Terebici</text><text x="1222" y="402" textLength="29">494 m</text><text x="946" y="477" textLength="31">Dealul</text><text x="947" y="489" textLength="25">Mare</text><text x="947" y="500.500" textLength="29">477 m</text></g>
<g class="airport"><text x="586" y="624" textLength="48">Aeroportul</text><text x="586" y="636" textLength="32">Sportiv</text><text x="586" y="647.500" textLength="52">Elie Carafoli</text><text class="works" x="412" y="768" textLength="44">Azomureș</text></g>
<g class="road-name"><text transform="translate(628 447.500)" textLength="53">Strada Podem</text><text transform="translate(596 559) rotate(53)" textLength="62">Strada Barajului</text><text transform="translate(525 669) rotate(-36)" textLength="60">Strada Libertății</text><text transform="translate(1085 520.500) rotate(-18)" textLength="49">Strada Lungă</text><text transform="translate(1227 519) rotate(6)" textLength="49">Strada Lungă</text><g class="river-name"><text transform="translate(723 421) rotate(-33)" textLength="26">Mureș</text><text transform="translate(396 677) rotate(-83)" textLength="25">Mureș</text></g></g>
<g class="ink"><path d="M775 381l4-1 1 6-3-2zM360 764l3-6"/></g>
</svg>
      <div class="zoom"><button class="zoom-btn">+</button><button class="zoom-btn">−</button></div>
      <svg class="pin" width="52" height="46" viewBox="0 0 52 46"><defs><linearGradient id="pg" x2="0" y2="1"><stop stop-color="#3b92d1"/><stop offset="1" stop-color="#1f78c2"/></linearGradient><filter id="bl"><feGaussianBlur stdDeviation="2"/></filter></defs><path d="M13 40L21 24Q30 16 34 22Q36 29 25 35Z" opacity=".32" filter="url(#bl)"/><path d="M12.500.5C6 .5.500 5.800.500 12.500c0 3 1.300 6 2.700 8.700L12.500 40l9.300-18.800c1.400-2.700 2.700-5.700 2.700-8.700C24.500 5.800 19 .5 12.500.5Z" fill="url(#pg)" stroke="#2e6fa4"/><circle cx="12.500" cy="13" r="4.300" fill="#fff" stroke="#2d71a8" stroke-width=".8"/></svg>
      <div class="popup"><div class="bubble"><b>Marosvasarhely</b></div><div class="tip"></div><svg class="close" width="9" height="9" viewBox="0 0 9 9"><path d="M.7.700L8.300 8.300M8.300.700L.7 8.300" stroke="#757575" stroke-width="1.250"/></svg></div>
      <div class="credit"><svg width="12" height="8" viewBox="0 0 12 8"><path fill="#4c7be1" d="M0 0h12v4H0z"/><path fill="#ffd500" d="M0 4h12v3H0z"/><path fill="#e0bc00" d="M0 7h12v1H0z"/></svg><span>Leaflet</span></div>
    </div>
    <div class="actions"><button class="back">Back to List</button></div>
  </section>
</main>
<div class="footer-line"></div>
</body>
</html>
```
FILE: styles.css
```css
* { box-sizing: border-box; }
html, body { height: 841px; overflow: hidden; }
body { margin: 0; background: #fff; color: #212529; font: 16px/24px "Open Sans", "Noto Sans", sans-serif; box-shadow: inset 0 12px 12px -10px rgba(0,0,0,.09); }
.page { padding: 15px 69px 0 52px; }
.title { margin: 0 0 7px; font-size: 32px; line-height: 38px; font-weight: 600; font-stretch: 95%; letter-spacing: -.92px; }
.card { height: 820px; padding: 24px; border: 1px solid #dcdddf; border-radius: 4px; background: #fff; box-shadow: 0 8px 16px rgba(0,0,0,.15); }
.field { margin-bottom: 16px; }
.label { display: block; height: 24px; margin-bottom: 8px; font-size: 15.500px; letter-spacing: -.15px; }
.control { display: block; width: 100%; height: 38px; padding: 6px 12px; border: 1px solid #ced4da; border-radius: 4px; background: #e9ecef; color: #212529; font: 15.500px/24px "Open Sans", sans-serif; letter-spacing: -.32px; outline: 0; }
.map { position: relative; height: 400px; border: 1px solid #dee2e6; border-radius: 4px; overflow: hidden; box-shadow: 0 2px 4px rgba(0,0,0,.075); }
.tiles { display: block; }
.actions { display: flex; justify-content: flex-end; margin-top: 24px; }
.back { width: 106px; height: 38px; padding: 0; border: 0; border-radius: 4px; background: #6c757d; color: #fff; font: 15.500px/24px "Open Sans", sans-serif; letter-spacing: -.2px; }
.footer-line { position: absolute; left: 0; right: 0; top: 839px; height: 1px; background: #dee2e6; }

.zoom { position: absolute; left: 10px; top: 10px; width: 34px; border: 2px solid rgba(0,0,0,.2); border-radius: 4px; background-clip: padding-box; }
.zoom-btn { display: block; width: 30px; height: 30px; padding: 3px 0 0; border: 0; background: #fff; color: #000; font: bold 23px/26px "Liberation Mono", monospace; }
.zoom-btn:first-child { border-bottom: 1px solid #ccc; border-radius: 2px 2px 0 0; }
.zoom-btn:last-child { border-radius: 0 0 2px 2px; }
.pin { position: absolute; left: 643px; top: 142px; }
.popup { position: absolute; left: 583px; top: 92px; width: 145px; height: 44px; }
.bubble { height: 44px; padding-left: 21px; border-radius: 12px; background: #fff; box-shadow: 0 3px 14px rgba(0,0,0,.4); color: #333; font: 13px/43px "Liberation Sans", sans-serif; }
.tip { position: absolute; left: 64px; top: 35px; width: 17px; height: 17px; background: #fff; transform: rotate(45deg); }
.close { position: absolute; right: 7px; top: 8px; }
.credit { position: absolute; right: 0; bottom: 0; display: flex; align-items: center; gap: 3px; height: 16px; padding: 0 5px; background: rgba(255,255,255,.8); color: #0078a8; font: 12px/16px "Liberation Sans", sans-serif; }

.tiles path, .tiles polygon { vector-effect: non-scaling-stroke; }
.ta { transform: translate(77px,375px) scale(.333333); }
.tb { transform: translate(77px,575px) scale(.333333); }
.tc { transform: translate(390px,375px) scale(.333333); }
.td { transform: translate(390px,575px) scale(.333333); }
.te { transform: translate(700px,375px) scale(.333333); }
.tf { transform: translate(700px,575px) scale(.333333); }
.tg { transform: translate(1010px,375px) scale(.333333); }
.th { transform: translate(1010px,575px) scale(.333333); }
.farm { fill: #eef0d5; }
.grass { fill: #cdebb0; }
.forest { fill: #add19e; }
.park { fill: #aacbaf; }
.town { fill: #e0dfdf; }
.ind { fill: #ebdbe8; }
.tan { fill: #f5dcba; }
.water { fill: #aad3df; }
.retail { fill: #ffd6d1; }
.lemon { fill: #ffffc8; }
.river, .riverline, .track, .border, .quarry, .tree { fill: none; }
.river path { stroke: #aad3df; stroke-width: 8; }
.river .mid { stroke-width: 5.5; }
.river .thin { stroke-width: 3; }
.riverline { stroke: #8b93c4; stroke-width: 1; stroke-dasharray: 3 2; }
.st-case, .st-fill, .av-case, .av-fill, .ye-case, .ye-fill, .or-case, .or-fill, .red, .red-case { fill: none; stroke-linecap: round; stroke-linejoin: round; }
.st-case { stroke: #c6c4c4; stroke-width: 2.4; }
.st-fill { stroke: #fff; stroke-width: 1.7; }
.av-case { stroke: #b5b3b3; stroke-width: 3.6; }
.av-fill { stroke: #fff; stroke-width: 2.7; }
.ye-case { stroke: #b5ba6a; stroke-width: 5.4; }
.ye-fill { stroke: #f7fabf; stroke-width: 4.2; }
.or-case { stroke: #bd8b42; stroke-width: 5.4; }
.or-fill { stroke: #fcd6a4; stroke-width: 4.3; }
.red-case { stroke: #d0604c; stroke-width: 7; }
.red { stroke: #f9b29c; stroke-width: 5.6; }
.ra-case { fill: none; stroke: #707070; stroke-width: 2.6; }
.ra-fill { fill: none; stroke: #ddd; stroke-width: .7; stroke-dasharray: 6 5; }
.yard { stroke-width: 2.6; }
.track { stroke: #c6a566; stroke-width: .9; stroke-dasharray: 5 2.5; }
.border { stroke: #b99fb5; stroke-width: 1.3; stroke-dasharray: 5 1.5 1.5 1.5; }
.quarry { stroke: #8e6b70; stroke-width: 2.2; }
.tree { stroke: #8db682; stroke-width: .8; }
.tiles text { font-family: "Noto Sans", sans-serif; text-anchor: middle; paint-order: stroke; stroke-linejoin: round; stroke: rgba(255,255,255,.65); stroke-width: 2.2px; }
.place { font-size: 11.8px; fill: #333; }
.tiles .place text { letter-spacing: -.3px; }
.tiles .place .city { font-size: 14px; }
.shield { fill: #eff1d2; stroke: #bcbf90; font-size: 10.8px; }
.plain { fill: #f0efef; stroke: #b8b8b8; }
.tiles .shield text { stroke: none; fill: #4c5523; }
.tiles .plaintext text { fill: #484848; }
.tiles .peaktext text { font-size: 10.4px; fill: #7d5438; stroke: rgba(255,255,255,.45); }
.tiles .airport text { font-size: 10.300px; font-style: italic; fill: #7c56b5; }
.tiles .airport .works { fill: #765079; }
.road-name { font-size: 8.400px; fill: #222; }
.tiles .road-name text { stroke-width: .7px; }
.tiles .river-name text { font-size: 10px; font-style: italic; fill: #4c8cbb; }
.ink { fill: #333; stroke: #555; stroke-width: .6; }
```
